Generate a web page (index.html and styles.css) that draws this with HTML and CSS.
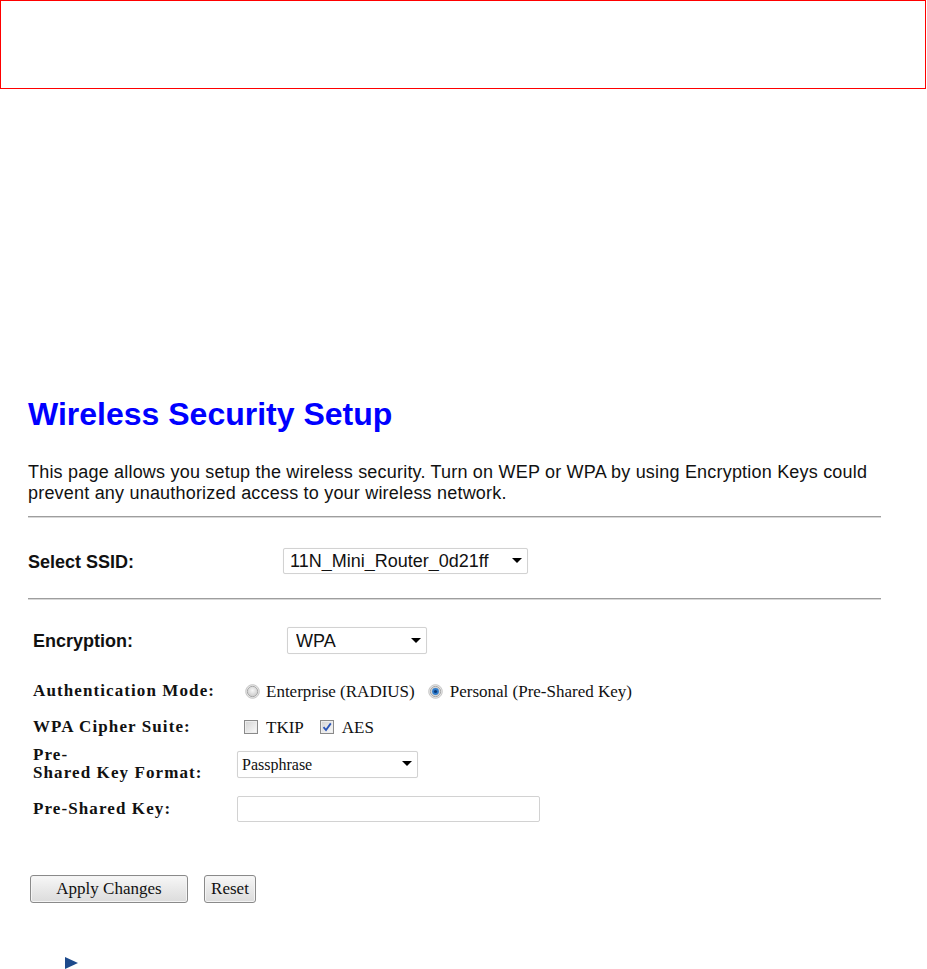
FILE: index.html
```html
<!DOCTYPE html>
<html lang="en">
<head>
<meta charset="utf-8">
<title>Wireless Security Setup</title>
<link rel="stylesheet" href="styles.css">
</head>
<body>
<div class="frame"></div>
<main class="page">
  <h1 class="title">Wireless Security Setup</h1>
  <p class="intro">This page allows you setup the wireless security. Turn on WEP or WPA by using Encryption Keys could prevent any unauthorized access to your wireless network.</p>
  <hr class="rule">
  <div class="ssid-row">
    <label class="sans-label ssid-label">Select SSID:</label>
    <span class="dropdown"><select class="select select-ssid"><option>11N_Mini_Router_0d21ff</option></select></span>
  </div>
  <hr class="rule rule-2">
  <div class="enc-row">
    <label class="sans-label enc-label">Encryption:</label>
    <span class="dropdown"><select class="select select-enc"><option>WPA</option></select></span>
  </div>
  <div class="opts">
    <div class="opt-row row-auth">
      <span class="serif-label">Authentication Mode:</span>
      <span class="opt-value">
        <span class="radio radio-first"><svg width="15" height="15" viewBox="0 0 15 15"><defs><radialGradient id="rg1" cx="50%" cy="40%" r="60%"><stop offset="0" stop-color="#f7f7f7"/><stop offset="1" stop-color="#c9c9c9"/></radialGradient></defs><circle cx="7.5" cy="7.5" r="6.8" fill="#ececec" stroke="#c4c4c4" stroke-width="1"/><circle cx="7.5" cy="7.5" r="5.2" fill="url(#rg1)" stroke="#9a9a9a" stroke-width="0.8"/></svg></span>
        <span class="serif opt-text">Enterprise (RADIUS)</span>
        <span class="radio radio-second"><svg width="15" height="15" viewBox="0 0 15 15"><circle cx="7.5" cy="7.5" r="6.8" fill="#ececec" stroke="#c4c4c4" stroke-width="1"/><circle cx="7.5" cy="7.5" r="5.2" fill="#d4d4d4" stroke="#9a9a9a" stroke-width="0.8"/><circle cx="7.5" cy="7.5" r="3.4" fill="#2f7ccc"/><circle cx="7.5" cy="7.5" r="1.6" fill="#0b3a78"/></svg></span>
        <span class="serif opt-text">Personal (Pre-Shared Key)</span>
      </span>
    </div>
    <div class="opt-row row-cipher">
      <span class="serif-label">WPA Cipher Suite:</span>
      <span class="opt-value">
        <span class="check check-first"><svg width="14" height="14" viewBox="0 0 14 14"><defs><linearGradient id="cg1" x1="0" y1="0" x2="1" y2="1"><stop offset="0" stop-color="#d6d6d6"/><stop offset="1" stop-color="#f7f7f7"/></linearGradient></defs><rect x="0.5" y="0.5" width="13" height="13" fill="#ededed" stroke="#8a8a8a"/><rect x="2" y="2" width="10" height="10" fill="url(#cg1)"/></svg></span>
        <span class="serif opt-text">TKIP</span>
        <span class="check check-second"><svg width="14" height="14" viewBox="0 0 14 14"><rect x="0.5" y="0.5" width="13" height="13" fill="#ededed" stroke="#8a8a8a"/><rect x="2" y="2" width="10" height="10" fill="url(#cg1)"/><path d="M3.5 7.2 L6 10 L10.8 3.4" fill="none" stroke="#2a55b8" stroke-width="1.8"/></svg></span>
        <span class="serif opt-text">AES</span>
      </span>
    </div>
    <div class="opt-row row-format">
      <span class="serif-label">Pre-<br>Shared Key Format:</span>
      <span class="opt-value">
        <span class="dropdown"><select class="select select-format"><option>Passphrase</option></select></span>
      </span>
    </div>
    <div class="opt-row row-key">
      <span class="serif-label">Pre-Shared Key:</span>
      <span class="opt-value"><input class="text-input" type="text"></span>
    </div>
  </div>
  <div class="buttons">
    <button class="btn btn-apply" type="button">Apply Changes</button>
    <button class="btn btn-reset" type="button">Reset</button>
  </div>
  <div class="more">
    <svg width="13" height="12" viewBox="0 0 13 12"><path d="M0 0 L13 6 L0 12 Z" fill="#1d4a8c"/></svg>
  </div>
</main>
</body>
</html>
```

FILE: styles.css
```css
html, body {
  margin: 0;
  padding: 0;
  background: #ffffff;
}

body {
  font-family: "Liberation Sans", Arial, sans-serif;
  color: #000;
}

.frame {
  box-sizing: border-box;
  width: 926px;
  height: 89px;
  border: 1px solid #ff0000;
}

.page {
  width: 853px;
  padding-left: 28px;
}

.title {
  margin: 307px 0 0;
  font: bold 32px/37px "Liberation Sans", Arial, sans-serif;
  color: #0000ff;
}

.intro {
  margin: 29px 0 0;
  font-size: 18px;
  line-height: 21px;
  letter-spacing: 0.2px;
  color: #111;
}

.rule {
  margin: 12px 0 0;
  height: 0;
  border: 0;
  border-top: 1px solid #9e9e9e;
  border-bottom: 1px solid #d8d8d8;
}

.rule-2 {
  margin-top: 24px;
}

.ssid-row {
  margin-top: 30px;
  display: flex;
  align-items: center;
}

.enc-row {
  margin-top: 27px;
  display: flex;
  align-items: center;
}

.sans-label {
  font: bold 18px "Liberation Sans", Arial, sans-serif;
  color: #111;
}

.ssid-label {
  width: 255px;
  padding-top: 3px;
}

.enc-label {
  width: 254px;
  padding-left: 5px;
  padding-top: 2px;
}

.dropdown {
  position: relative;
  display: inline-block;
}

.dropdown::after {
  content: "";
  position: absolute;
  right: 6px;
  top: 50%;
  margin-top: -3px;
  border-left: 5px solid transparent;
  border-right: 5px solid transparent;
  border-top: 5px solid #000;
  pointer-events: none;
}

.select {
  -webkit-appearance: none;
  appearance: none;
  display: block;
  box-sizing: border-box;
  margin: 0;
  border: 1px solid #d2d2d2;
  border-radius: 2px;
  background: #fff;
  color: #111;
  box-shadow: 0 0 1px rgba(0, 0, 0, 0.08);
}

.select-ssid {
  width: 245px;
  height: 26px;
  padding: 0 0 0 6px;
  font: 18px "Liberation Sans", Arial, sans-serif;
}

.select-enc {
  width: 140px;
  height: 27px;
  padding: 0 0 0 8px;
  font: 18px "Liberation Sans", Arial, sans-serif;
}

.select-format {
  width: 181px;
  height: 27px;
  padding: 0 0 0 4px;
  font: 16px "Liberation Serif", "Times New Roman", serif;
}

.opts {
  margin-top: 24px;
  padding-left: 5px;
  display: flex;
  flex-direction: column;
}

.opt-row {
  display: grid;
  grid-template-columns: 204px auto;
  align-items: center;
}

.row-auth {
  height: 26px;
}

.row-cipher {
  margin-top: 10px;
  height: 26px;
}

.row-format {
  margin-top: 6px;
  height: 36px;
}

.row-key {
  margin-top: 14px;
  height: 26px;
}

.serif-label {
  font: bold 17px/18px "Liberation Serif", "Times New Roman", serif;
  letter-spacing: 1.1px;
  color: #111;
}

.serif {
  font: 17px "Liberation Serif", "Times New Roman", serif;
  color: #111;
}

.opt-value {
  display: flex;
  align-items: center;
}

.radio {
  display: inline-flex;
  width: 15px;
  height: 15px;
}

.check {
  display: inline-flex;
  width: 14px;
  height: 14px;
}

.radio-first {
  margin-left: 8px;
  margin-right: 6px;
}

.radio-second {
  margin-left: 13px;
  margin-right: 7px;
}

.check-first {
  margin-left: 7px;
  margin-right: 8px;
}

.check-second {
  margin-left: 16px;
  margin-right: 8px;
}

.opt-text {
  padding-top: 2px;
}

.text-input {
  box-sizing: border-box;
  width: 303px;
  height: 26px;
  margin: 0;
  border: 1px solid #d2d2d2;
  border-radius: 2px;
  background: #fff;
}

.buttons {
  margin-top: 53px;
  margin-left: 2px;
  display: flex;
  gap: 16px;
}

.btn {
  box-sizing: border-box;
  height: 28px;
  padding: 0;
  border: 1px solid #8a8a8a;
  border-radius: 3px;
  background: linear-gradient(#f7f7f7, #e9e9e9 50%, #dcdcdc);
  box-shadow: inset 0 0 0 1px #f4f4f4;
  font: 17px "Liberation Serif", "Times New Roman", serif;
  color: #111;
}

.btn-apply {
  width: 158px;
}

.btn-reset {
  width: 52px;
}

.more {
  margin-top: 54px;
  padding-left: 37px;
  height: 12px;
  display: flex;
}
```
